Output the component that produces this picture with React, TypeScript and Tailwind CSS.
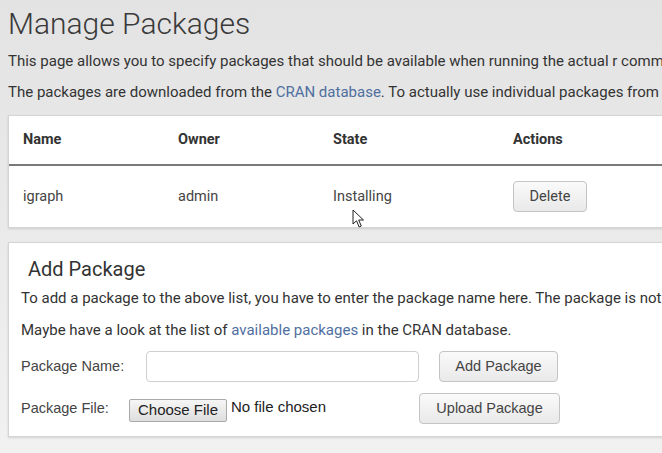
import React from 'react';

const rows = [{ name: 'igraph', owner: 'admin', state: 'Installing' }];

function Cursor() {
  return (
    <svg className="absolute left-[352px] top-[209px]" width="13" height="20" viewBox="0 0 13 20">
      <path d="M1 1 L1 15 L4.5 11.8 L7.2 18 L9.3 17 L6.7 11 L11.5 11 Z" fill="#fff" stroke="#222" strokeWidth="1" strokeLinejoin="round" />
    </svg>
  );
}

export default function App() {
  return (
    <div className="relative w-[662px] h-[453px] overflow-hidden bg-gradient-to-b from-[#e3e3e3] to-[#f1f1f1] text-[#333] font-['Roboto',sans-serif]">
      <div className="w-[760px] pl-2 pt-[1px]">
        <h1 className="text-[30px] font-light leading-[46px] text-[#3a3a3a]">Manage Packages</h1>
        <p className="mt-[4px] text-[15px] leading-[20px] whitespace-nowrap">
          This page allows you to specify packages that should be available when running the actual r commands
        </p>
        <p className="mt-[11px] text-[15px] leading-[20px] whitespace-nowrap">
          The packages are downloaded from the <a className="text-[#4f6f9f]">CRAN database</a>. To actually use individual packages from the database
        </p>

        <div className="mt-[13px] bg-white border border-[#d4d4d4] shadow-[0_1px_2px_rgba(0,0,0,0.12)]">
          <div className="grid grid-cols-[155px_155px_180px_1fr] h-[50px] items-center px-[14px] border-b-2 border-[#7a7a7a] text-[14.5px] font-bold text-[#333]">
            <div>Name</div>
            <div>Owner</div>
            <div>State</div>
            <div>Actions</div>
          </div>
          {rows.map((r) => (
            <div key={r.name} className="grid grid-cols-[155px_155px_180px_1fr] h-[61px] items-center px-[14px] text-[14.5px] text-[#444]">
              <div>{r.name}</div>
              <div>{r.owner}</div>
              <div>{r.state}</div>
              <div>
                <button className="w-[74px] h-[31px] rounded-[4px] border border-[#c4c4c4] bg-gradient-to-b from-[#fafafa] to-[#e9e9e9] text-[14.5px] text-[#444]">
                  Delete
                </button>
              </div>
            </div>
          ))}
        </div>

        <div className="mt-[14px] bg-white border border-[#d4d4d4] shadow-[0_1px_2px_rgba(0,0,0,0.12)] pl-[12px] pt-[12px] pb-[12px]">
          <h2 className="pl-[7px] text-[20px] leading-[28px] text-[#333]">Add Package</h2>
          <p className="mt-[5px] text-[15px] leading-[20px] whitespace-nowrap">
            To add a package to the above list, you have to enter the package name here. The package is not installed immediately
          </p>
          <p className="mt-[12px] text-[15px] leading-[20px] whitespace-nowrap">
            Maybe have a look at the list of <a className="text-[#4f6f9f]">available packages</a> in the CRAN database.
          </p>

          <div className="mt-[11px] flex items-center h-[31px] font-['Liberation_Sans',Arial,sans-serif] text-[14.5px] text-[#444]">
            <label className="w-[125px]">Package Name:</label>
            <input className="w-[273px] h-[31px] rounded-[4px] border border-[#cfcfcf] bg-white px-2" />
            <button className="ml-[20px] w-[119px] h-[31px] rounded-[4px] border border-[#c4c4c4] bg-gradient-to-b from-[#fafafa] to-[#e9e9e9] text-[14.5px] text-[#444]">
              Add Package
            </button>
          </div>

          <div className="mt-[11px] flex items-center h-[31px] font-['Liberation_Sans',Arial,sans-serif] text-[14.5px] text-[#444]">
            <label className="w-[108px]">Package File:</label>
            <span className="w-[98px] h-[23px] mt-[4px] flex items-center justify-center rounded-[2px] border border-[#a9a9a9] bg-gradient-to-b from-[#f6f6f6] to-[#dedede] text-[15px] text-[#222]">
              Choose File
            </span>
            <span className="ml-[4px] -mt-[3px] text-[15px] text-[#222]">No file chosen</span>
            <button className="ml-[93px] w-[141px] h-[31px] rounded-[4px] border border-[#c4c4c4] bg-gradient-to-b from-[#fafafa] to-[#e9e9e9] text-[14.5px] text-[#444]">
              Upload Package
            </button>
          </div>
        </div>
      </div>
      <Cursor />
    </div>
  );
}
